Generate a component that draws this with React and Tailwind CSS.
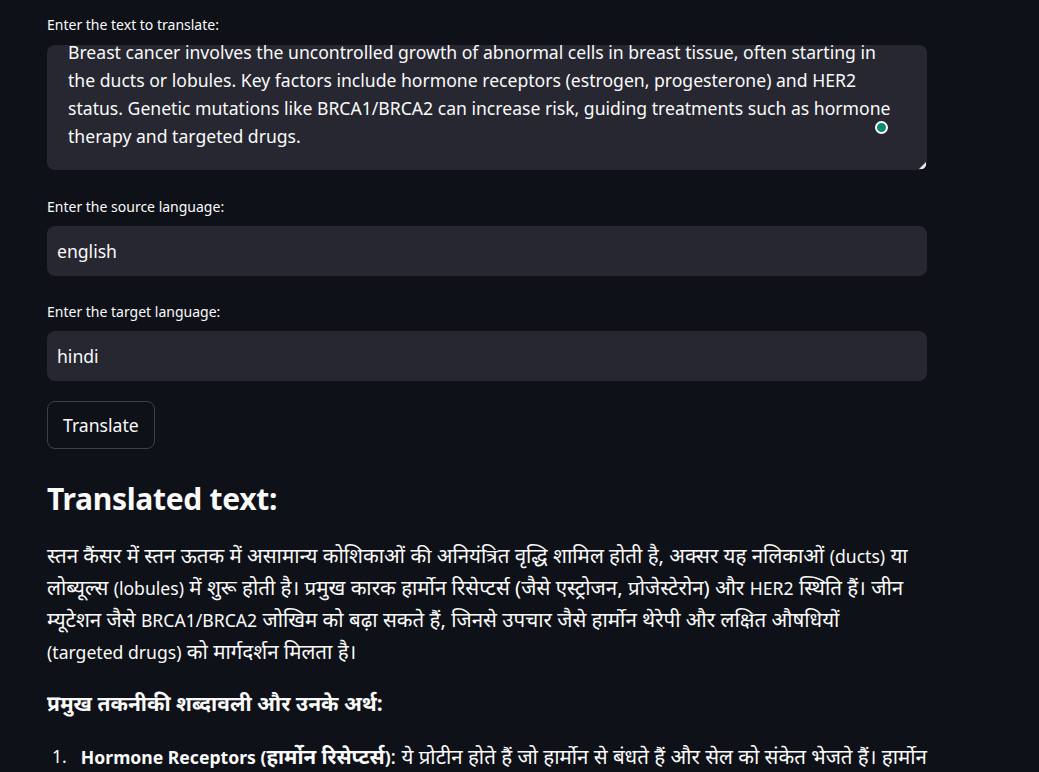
const font = { fontFamily: '"Noto Sans", "Noto Sans Devanagari", sans-serif' };

const Label = ({ children }) => (
  <p className="text-[14px] leading-[20px] text-[#fafafa] mb-[9px]">{children}</p>
);

const En = ({ children }) => <span className="text-[17.6px] leading-none">{children}</span>;

const Line = ({ children, className = '' }) => (
  <div className={`h-[32px] leading-[32px] whitespace-nowrap ${className}`}>{children}</div>
);

const App = () => {
  return (
    <div className="min-h-[772px] w-full bg-[#0e1117] text-[#fafafa] overflow-hidden" style={font}>
      <div className="w-[880px] ml-[47px] pt-[15px]">
        <p className="text-[14px] leading-[20px] text-[#fafafa] mb-[10px]">Enter the text to translate:</p>
        <div className="relative h-[125px] rounded-[8px] bg-[#262730] overflow-hidden">
          <div className="-mt-[7px] pl-[21px] pr-[30px] text-[17.6px] leading-[28px] whitespace-nowrap">
            Breast cancer involves the uncontrolled growth of abnormal cells in breast tissue, often starting in
            <br />
            the ducts or lobules. Key factors include hormone receptors (estrogen, progesterone) and HER2
            <br />
            status. Genetic mutations like BRCA1/BRCA2 can increase risk, guiding treatments such as hormone
            <br />
            therapy and targeted drugs.
          </div>
          <span className="absolute left-[828px] top-[76px] w-[13px] h-[13px] rounded-full bg-[#0e8a73] border-2 border-white" />
          <svg className="absolute right-[1px] bottom-[1px]" width="7" height="7" viewBox="0 0 7 7">
            <path d="M7 0 L7 7 L0 7 Z" fill="#e5e5e5" />
          </svg>
        </div>

        <div className="mt-[27px]">
          <Label>Enter the source language:</Label>
          <div className="h-[50px] rounded-[8px] bg-[#262730] flex items-center px-[10px] text-[17.6px]">english</div>
        </div>

        <div className="mt-[26px]">
          <Label>Enter the target language:</Label>
          <div className="h-[50px] rounded-[8px] bg-[#262730] flex items-center px-[10px] text-[17.6px]">hindi</div>
        </div>

        <button className="block mt-[20px] h-[48px] w-[108px] rounded-[8px] border border-[#3d3f4a] bg-[#0e1117] text-[17.6px] text-[#fafafa] text-left pl-[15px]">
          Translate
        </button>

        <h2 className="mt-[28px] h-[44px] text-[30px] leading-[44px] font-bold tracking-[-0.3px]">Translated text:</h2>

        <div className="mt-[18px] text-[20.5px]">
          <Line>
            स्तन कैंसर में स्तन ऊतक में असामान्य कोशिकाओं की अनियंत्रित वृद्धि शामिल होती है, अक्सर यह नलिकाओं <En>(ducts)</En> या
          </Line>
          <Line>
            लोब्यूल्स <En>(lobules)</En> में शुरू होती है। प्रमुख कारक हार्मोन रिसेप्टर्स (जैसे एस्ट्रोजन, प्रोजेस्टेरोन) और <En>HER2</En> स्थिति हैं। जीन
          </Line>
          <Line>
            म्यूटेशन जैसे <En>BRCA1/BRCA2</En> जोखिम को बढ़ा सकते हैं, जिनसे उपचार जैसे हार्मोन थेरेपी और लक्षित औषधियों
          </Line>
          <Line>
            <En>(targeted drugs)</En> को मार्गदर्शन मिलता है।
          </Line>
        </div>

        <Line className="mt-[20px] text-[21px] font-bold">प्रमुख तकनीकी शब्दावली और उनके अर्थ:</Line>

        <ol className="mt-[21px] text-[20.5px]">
          <li className="flex h-[32px] leading-[32px] whitespace-nowrap">
            <span className="w-[36px] pl-[5px] text-[17.6px]">1.</span>
            <span className="pl-[2px]">
              <b>
                <En>Hormone Receptors (</En>हार्मोन रिसेप्टर्स<En>)</En>
              </b>
              : ये प्रोटीन होते हैं जो हार्मोन से बंधते हैं और सेल को संकेत भेजते हैं। हार्मोन
            </span>
          </li>
        </ol>
      </div>
    </div>
  );
};

export default App;
